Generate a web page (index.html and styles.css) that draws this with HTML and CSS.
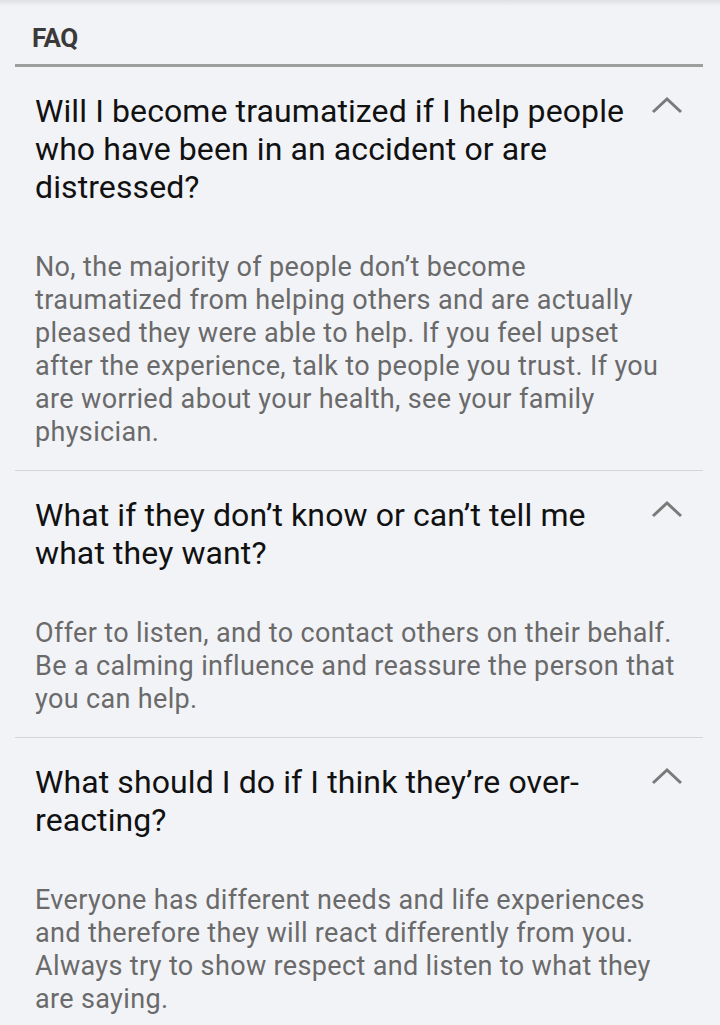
FILE: index.html
```html
<!DOCTYPE html>
<html>
<head>
<meta charset="utf-8">
<link rel="stylesheet" href="styles.css">
</head>
<body>
<div class="shadow"></div>
<main class="page">
  <h1 class="title">FAQ</h1>
  <section class="faq">
    <div class="item">
      <div class="q">
        <span class="q-text">Will I become traumatized if I help people who have been in an accident or are distressed?</span>
        <svg class="chev" width="32" height="18" viewBox="0 0 32 18"><path d="M2 16 L16 3 L30 16" fill="none" stroke="#7a7a7a" stroke-width="3"/></svg>
      </div>
      <p class="a">No, the majority of people don’t become traumatized from helping others and are actually pleased they were able to help. If you feel upset after the experience, talk to people you trust. If you are worried about your health, see your family physician.</p>
    </div>
    <div class="item">
      <div class="q">
        <span class="q-text">What if they don’t know or can’t tell me what they want?</span>
        <svg class="chev" width="32" height="18" viewBox="0 0 32 18"><path d="M2 16 L16 3 L30 16" fill="none" stroke="#7a7a7a" stroke-width="3"/></svg>
      </div>
      <p class="a">Offer to listen, and to contact others on their behalf. Be a calming influence and reassure the person that you can help.</p>
    </div>
    <div class="item">
      <div class="q">
        <span class="q-text">What should I do if I think they’re over-reacting?</span>
        <svg class="chev" width="32" height="18" viewBox="0 0 32 18"><path d="M2 16 L16 3 L30 16" fill="none" stroke="#7a7a7a" stroke-width="3"/></svg>
      </div>
      <p class="a">Everyone has different needs and life experiences and therefore they will react differently from you. Always try to show respect and listen to what they are saying.</p>
    </div>
  </section>
</main>
</body>
</html>
```
FILE: styles.css
```css
html, body {
  margin: 0;
  padding: 0;
  background: #f2f3f7;
}
body {
  font-family: Roboto, "Noto Sans", sans-serif;
  overflow: hidden;
}
.shadow {
  height: 6px;
  background: linear-gradient(#dedfe3, #f2f3f7);
  margin-bottom: -6px;
}
.page {
  padding: 0 17px 0 15px;
}
.title {
  margin: 0;
  padding: 22px 0 0 17px;
  font-size: 26px;
  font-weight: 700;
  color: #3a3a3a;
  line-height: 32px;
  height: 42px;
  letter-spacing: -0.5px;
  border-bottom: 3px solid #9e9e9e;
}
.item {
  border-bottom: 1px solid #d4d4d6;
  padding: 25px 0 21px 20px;
}
.item:last-child {
  border-bottom: none;
}
.q {
  display: flex;
  align-items: flex-start;
  justify-content: space-between;
}
.q-text {
  font-size: 32px;
  line-height: 38px;
  letter-spacing: 0.1px;
  color: #111;
  max-width: 600px;
}
.chev {
  margin-top: 4px;
  margin-right: 20px;
  flex: none;
}
.a {
  margin: 45px 0 0;
  font-size: 27px;
  line-height: 33px;
  letter-spacing: 0.35px;
  color: #6a6a6a;
  max-width: 643px;
}
```
